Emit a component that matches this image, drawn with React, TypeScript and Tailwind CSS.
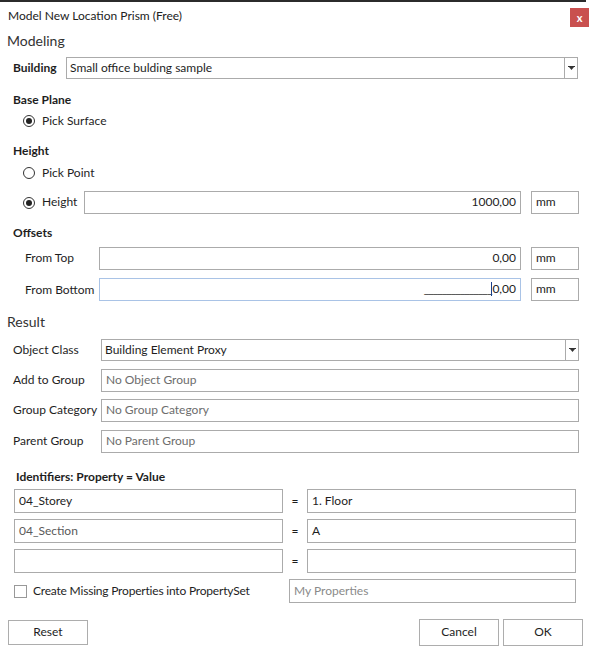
import React from 'react';

const font = { fontFamily: 'Lato, "Noto Sans", sans-serif' };

function Caret() {
  return (
    <svg width="7" height="4" viewBox="0 0 7 4" className="block">
      <rect x="0" y="0" width="7" height="1" fill="#333" />
      <path d="M1 1 H6 L3.5 4 Z" fill="#333" />
    </svg>
  );
}

function Radio({ checked }: { checked?: boolean }) {
  return (
    <span className="w-[12px] h-[12px] rounded-full border border-[#333] flex items-center justify-center shrink-0">
      {checked && <span className="w-[6px] h-[6px] rounded-full bg-[#222]" />}
    </span>
  );
}

function Box({ className, children, right }: { className: string; children?: React.ReactNode; right?: boolean }) {
  return (
    <div className={`border border-[#ababab] bg-white flex items-center px-[4px] pb-[1px] whitespace-nowrap ${right ? 'justify-end' : ''} ${className}`}>
      {children}
    </div>
  );
}

function Combo({ className, value }: { className: string; value: string }) {
  return (
    <div className={`border border-[#ababab] bg-white flex items-stretch ${className}`}>
      <div className="flex-1 flex items-center px-[3px] pb-[1px] text-[#1e1e1e]">{value}</div>
      <div className="w-[13px] border-l border-[#ababab] flex items-center justify-center">
        <Caret />
      </div>
    </div>
  );
}

function Unit() {
  return <Box className="ml-[10px] w-[48px] h-[23px] text-[#1e1e1e]">mm</Box>;
}

export default function App() {
  return (
    <div className="w-[590px] h-[653px] bg-white text-[12px] text-[#1e1e1e] relative overflow-hidden whitespace-nowrap" style={font}>
      <div className="w-[586px] h-[2px] bg-[#2b2b2b]" />

      {/* title bar */}
      <div className="h-[29px] flex items-center justify-between pl-[8px] pr-[1px]">
        <span className="text-[#222] pb-[2px]">Model New Location Prism (Free)</span>
        <button className="w-[19px] h-[19px] mt-[2px] bg-[#c9504f] text-white font-bold text-[11px] leading-none flex items-center justify-center">
          x
        </button>
      </div>

      <div className="h-[20px] flex items-center pl-[7px] pb-[2px] text-[14px] text-[#333]">Modeling</div>

      <div className="mt-[6px] h-[22px] flex items-center pl-[13px]">
        <span className="font-bold w-[53px] pb-[1px]">Building</span>
        <Combo className="w-[512px] h-[22px]" value="Small office bulding sample" />
      </div>

      <div className="mt-[13px] h-[16px] flex items-center pl-[13px] pb-[1px] font-bold">Base Plane</div>
      <div className="mt-[5px] h-[16px] flex items-center pl-[23px] gap-[7px]">
        <Radio checked />
        <span className="pb-[1px]">Pick Surface</span>
      </div>

      <div className="mt-[14px] h-[16px] flex items-center pl-[13px] pb-[1px] font-bold">Height</div>
      <div className="mt-[6px] h-[16px] flex items-center pl-[23px] gap-[7px]">
        <Radio />
        <span className="pb-[1px]">Pick Point</span>
      </div>
      <div className="mt-[10px] h-[23px] flex items-center pl-[23px]">
        <Radio checked />
        <span className="ml-[7px] w-[42px] pb-[2px]">Height</span>
        <Box className="w-[437px] h-[23px]" right>1000,00</Box>
        <Unit />
      </div>

      <div className="mt-[11px] h-[16px] flex items-center pl-[13px] pb-[1px] font-bold">Offsets</div>
      <div className="mt-[6px] h-[23px] flex items-center pl-[25px]">
        <span className="w-[74px] pb-[2px]">From Top</span>
        <Box className="w-[422px] h-[23px]" right>0,00</Box>
        <Unit />
      </div>
      <div className="mt-[8px] h-[23px] flex items-center pl-[25px]">
        <span className="w-[74px]">From Bottom</span>
        <div className="w-[422px] h-[23px] border border-[#a9c3e6] flex items-center justify-end px-[4px] pb-[1px]">
          <span className="tracking-[-1px]">_______________</span>
          <span className="w-[1px] h-[14px] bg-[#1a3f8a]" />
          <span>0,00</span>
        </div>
        <Unit />
      </div>

      <div className="mt-[11px] h-[20px] flex items-center pl-[7px] pb-[2px] text-[14px] text-[#333]">Result</div>

      <div className="mt-[7px] h-[22px] flex items-center pl-[13px]">
        <span className="w-[88px] pb-[1px]">Object Class</span>
        <Combo className="w-[478px] h-[22px]" value="Building Element Proxy" />
      </div>
      {[
        ['Add to Group', 'No Object Group', 'mt-[8px]'],
        ['Group Category', 'No Group Category', 'mt-[7px]'],
        ['Parent Group', 'No Parent Group', 'mt-[8px]'],
      ].map(([label, value, mt]) => (
        <div key={label} className={`${mt} h-[23px] flex items-center pl-[13px]`}>
          <span className="w-[88px] pb-[1px]">{label}</span>
          <Box className="w-[478px] h-[23px] text-[#6d6d6d]">{value}</Box>
        </div>
      ))}

      <div className="mt-[16px] h-[16px] flex items-center pl-[16px] pb-[1px] font-bold">Identifiers: Property = Value</div>

      {[
        ['04_Storey', '1. Floor', 'text-[#1e1e1e]'],
        ['04_Section', 'A', 'text-[#5a5a5a]'],
        ['', '', ''],
      ].map(([prop, val, color], i) => (
        <div key={i} className={`${i === 0 ? 'mt-[4px]' : 'mt-[6px]'} h-[24px] flex items-center pl-[14px]`}>
          <Box className={`w-[269px] h-[24px] ${color}`}>{prop}</Box>
          <span className="w-[24px] text-center pb-[1px]">=</span>
          <Box className="w-[269px] h-[24px]">{val}</Box>
        </div>
      ))}

      <div className="mt-[6px] h-[24px] flex items-center pl-[14px]">
        <span className="w-[13px] h-[13px] border border-[#999] bg-white shrink-0" />
        <span className="ml-[6px] w-[256px] pb-[1px] tracking-[-0.2px]">Create Missing Properties into PropertySet</span>
        <Box className="w-[287px] h-[24px] text-[#8a8a8a]">My Properties</Box>
      </div>

      <div className="mt-[16px] h-[27px] flex items-center px-[8px]">
        <button className="w-[80px] h-[25px] border border-[#adadad] bg-white pb-[1px]">Reset</button>
        <div className="flex-1" />
        <button className="w-[80px] h-[27px] border border-[#adadad] bg-white pb-[1px]">Cancel</button>
        <button className="ml-[4px] mr-[-1px] w-[80px] h-[27px] border border-[#adadad] bg-white pb-[1px]">OK</button>
      </div>
    </div>
  );
}
